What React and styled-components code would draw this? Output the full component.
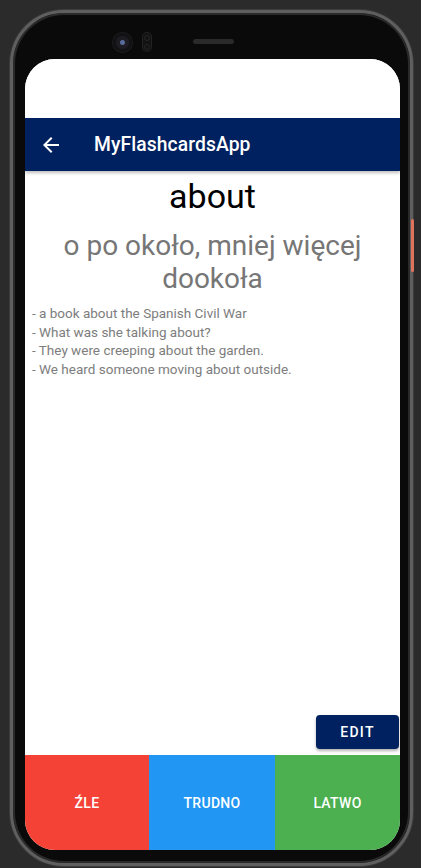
import React from "react";
import styled, { createGlobalStyle } from "styled-components";

const GlobalStyle = createGlobalStyle`
  html, body {
    margin: 0;
    padding: 0;
    background: #2b2b2b;
    font-family: Roboto, "Noto Sans", "Liberation Sans", sans-serif;
  }
  * { box-sizing: border-box; }
`;

// Device frame
const Stage = styled.div`
  width: 421px;
  height: 868px;
  padding: 10px 0 0 10px;
  overflow: hidden;
`;

const Phone = styled.div`
  position: relative;
  width: 403px;
  height: 856px;
  border-radius: 54px;
  border: 3px solid #5f5f5f;
  box-shadow: 0 0 0 1px #3c3c3c, inset 0 0 0 2px #2a2a2a;
  background: #0b0a0a;
  padding: 0 10px 13px 12px;
  display: flex;
  flex-direction: column;
`;

const TopBezel = styled.div`
  height: 46px;
  flex-shrink: 0;
  display: flex;
  align-items: center;
  padding: 12px 0 0 88px;
`;

const Camera = styled.div`
  width: 19px;
  height: 19px;
  border-radius: 50%;
  background: radial-gradient(circle at 50% 50%, #5a6a9a 0 2px, #1c1c22 3px 6px, #121214 7px);
  box-shadow: 0 0 0 1px #1e1e1e;
`;

const Sensor = styled.div`
  margin-left: 11px;
  width: 8px;
  height: 18px;
  border-radius: 4px;
  background: #121212;
  box-shadow: 0 0 0 1px #222;
  display: flex;
  flex-direction: column;
  justify-content: space-around;
  align-items: center;
  span {
    width: 6px;
    height: 6px;
    border-radius: 50%;
    border: 1px solid #262626;
  }
`;

const Speaker = styled.div`
  margin-left: 42px;
  margin-top: -2px;
  width: 41px;
  height: 5px;
  border-radius: 3px;
  background: #2a2a2a;
`;

const SideKey = styled.div`
  position: absolute;
  right: -4px;
  top: 206px;
  width: 3px;
  height: 53px;
  border-radius: 2px;
  background: #e0735c;
`;

const Screen = styled.div`
  flex: 1;
  background: #ffffff;
  border-radius: 30px;
  overflow: hidden;
  display: flex;
  flex-direction: column;
`;

const StatusBar = styled.div`
  height: 59px;
  flex-shrink: 0;
  background: #ffffff;
`;

const AppBar = styled.header`
  height: 53px;
  flex-shrink: 0;
  background: #00215f;
  color: #ffffff;
  display: flex;
  align-items: center;
  padding-left: 14px;
  box-shadow: 0 2px 3px rgba(0, 0, 0, 0.25);
  position: relative;
  z-index: 1;
`;

const BackButton = styled.button`
  width: 24px;
  height: 24px;
  padding: 0;
  border: none;
  background: none;
  display: flex;
  align-items: center;
  justify-content: center;
`;

const Title = styled.h1`
  margin: 0 0 0 31px;
  font-size: 19.3px;
  font-weight: 500;
  letter-spacing: 0.1px;
`;

const Content = styled.main`
  flex: 1;
  display: flex;
  flex-direction: column;
  padding-top: 5px;
`;

const Word = styled.div`
  text-align: center;
  font-size: 34px;
  line-height: 40px;
  color: #000000;
`;

const Translation = styled.div`
  margin-top: 13px;
  text-align: center;
  font-size: 28px;
  line-height: 33px;
  color: #767676;
  padding: 0 20px;
`;

const Examples = styled.div`
  margin-top: 9px;
  padding-left: 7px;
  font-size: 13.5px;
  line-height: 18.5px;
  color: #7d7d7d;
`;

const EditButton = styled.button`
  margin: auto 1px 6px 0;
  align-self: flex-end;
  width: 83px;
  height: 34px;
  border: none;
  border-radius: 4px;
  background: #00215f;
  color: #ffffff;
  font-family: inherit;
  font-size: 14px;
  font-weight: 500;
  letter-spacing: 1.3px;
  box-shadow: 0 2px 3px rgba(0, 0, 0, 0.3);
`;

const Answers = styled.div`
  height: 95px;
  flex-shrink: 0;
  display: grid;
  grid-template-columns: 124px 126px 1fr;
`;

const Answer = styled.button`
  border: none;
  background: ${({ $bg }) => $bg};
  color: #ffffff;
  font-family: inherit;
  font-size: 14px;
  font-weight: 500;
  letter-spacing: 0.3px;
`;

const examples = [
  "- a book about the Spanish Civil War",
  "- What was she talking about?",
  "- They were creeping about the garden.",
  "- We heard someone moving about outside.",
];

const ArrowBack = () => (
  <svg width="24" height="24" viewBox="0 0 24 24" fill="#ffffff">
    <path d="M20 11H7.83l5.59-5.59L12 4l-8 8 8 8 1.41-1.41L7.83 13H20v-2z" />
  </svg>
);

export default function App() {
  return (
    <Stage>
      <GlobalStyle />
      <Phone>
        <SideKey />
        <TopBezel>
          <Camera />
          <Sensor>
            <span />
            <span />
          </Sensor>
          <Speaker />
        </TopBezel>
        <Screen>
          <StatusBar />
          <AppBar>
            <BackButton>
              <ArrowBack />
            </BackButton>
            <Title>MyFlashcardsApp</Title>
          </AppBar>
          <Content>
            <Word>about</Word>
            <Translation>o po około, mniej więcej dookoła</Translation>
            <Examples>
              {examples.map((e) => (
                <div key={e}>{e}</div>
              ))}
            </Examples>
            <EditButton>EDIT</EditButton>
          </Content>
          <Answers>
            <Answer $bg="#f44336">ŹLE</Answer>
            <Answer $bg="#2196f3">TRUDNO</Answer>
            <Answer $bg="#4caf50">LATWO</Answer>
          </Answers>
        </Screen>
      </Phone>
    </Stage>
  );
}
